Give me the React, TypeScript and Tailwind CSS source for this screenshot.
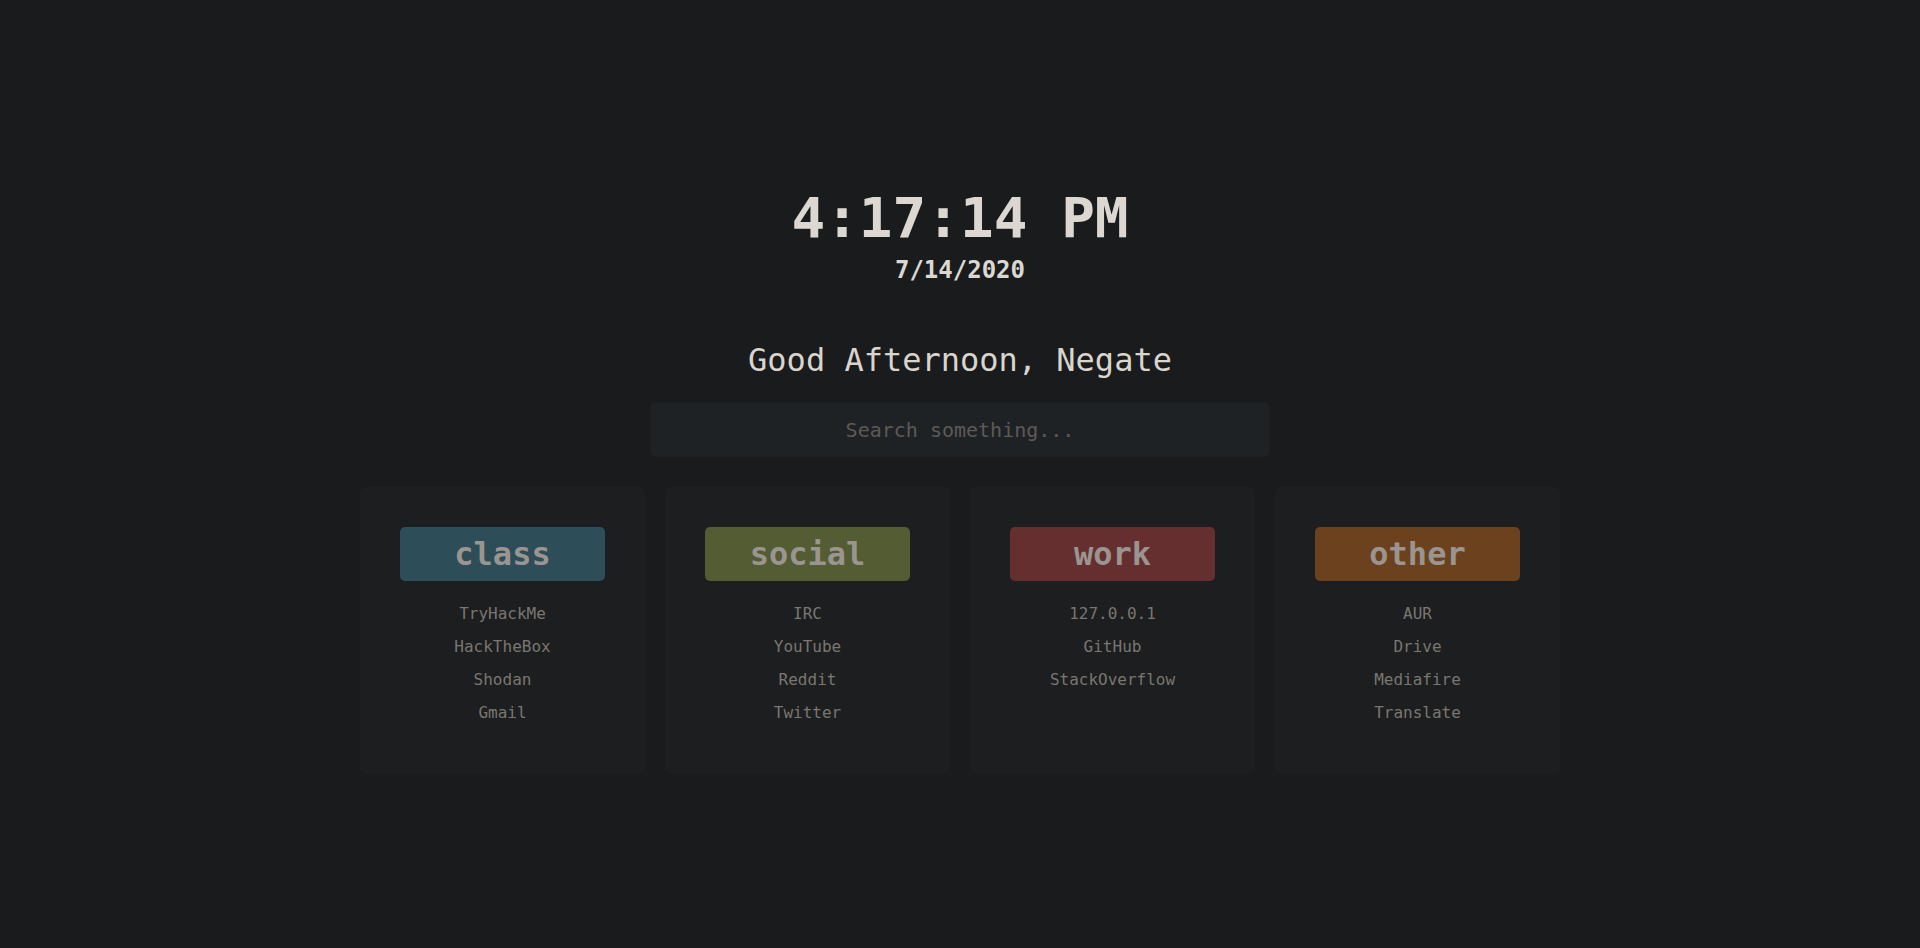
import React from "react";

const groups = [
  { name: "class", color: "bg-[#2d4d58]", links: ["TryHackMe", "HackTheBox", "Shodan", "Gmail"] },
  { name: "social", color: "bg-[#535c33]", links: ["IRC", "YouTube", "Reddit", "Twitter"] },
  { name: "work", color: "bg-[#662f2f]", links: ["127.0.0.1", "GitHub", "StackOverflow"] },
  { name: "other", color: "bg-[#6b421d]", links: ["AUR", "Drive", "Mediafire", "Translate"] },
];

export default function App() {
  return (
    <div className="min-h-screen w-full bg-[#1a1b1d] font-['DejaVu_Sans_Mono',monospace] flex flex-col items-center pt-[186px]">
      <div className="text-[56px] leading-[64px] font-bold text-[#dcd8d1]">4:17:14 PM</div>
      <div className="mt-[6px] text-[24px] leading-[28px] font-bold text-[#dcd8d1]">7/14/2020</div>
      <div className="mt-[56px] text-[32px] leading-[40px] text-[#d9d5cd]">Good Afternoon, Negate</div>
      <input
        className="mt-[22px] w-[620px] h-[55px] rounded-[5px] bg-[#1f2224] text-center text-[20px] text-[#d9d5cd] placeholder:text-[#5c5a57] outline-none border border-[#1d1f21]"
        placeholder="Search something..."
      />
      <div className="mt-[30px] grid grid-cols-4 gap-[20px] w-[1200px]">
        {groups.map((g) => (
          <div key={g.name} className="bg-[#1d1e20] rounded-[6px] px-[40px] pt-[40px] pb-[45px] flex flex-col items-stretch">
            <div className={`${g.color} h-[54px] rounded-[5px] flex items-center justify-center text-[32px] font-bold text-[#9a9590]`}>
              {g.name}
            </div>
            <div className="mt-[16px] flex flex-col items-center">
              {g.links.map((l) => (
                <a key={l} className="text-[16px] leading-[33px] text-[#7a7670]">
                  {l}
                </a>
              ))}
            </div>
          </div>
        ))}
      </div>
    </div>
  );
}
